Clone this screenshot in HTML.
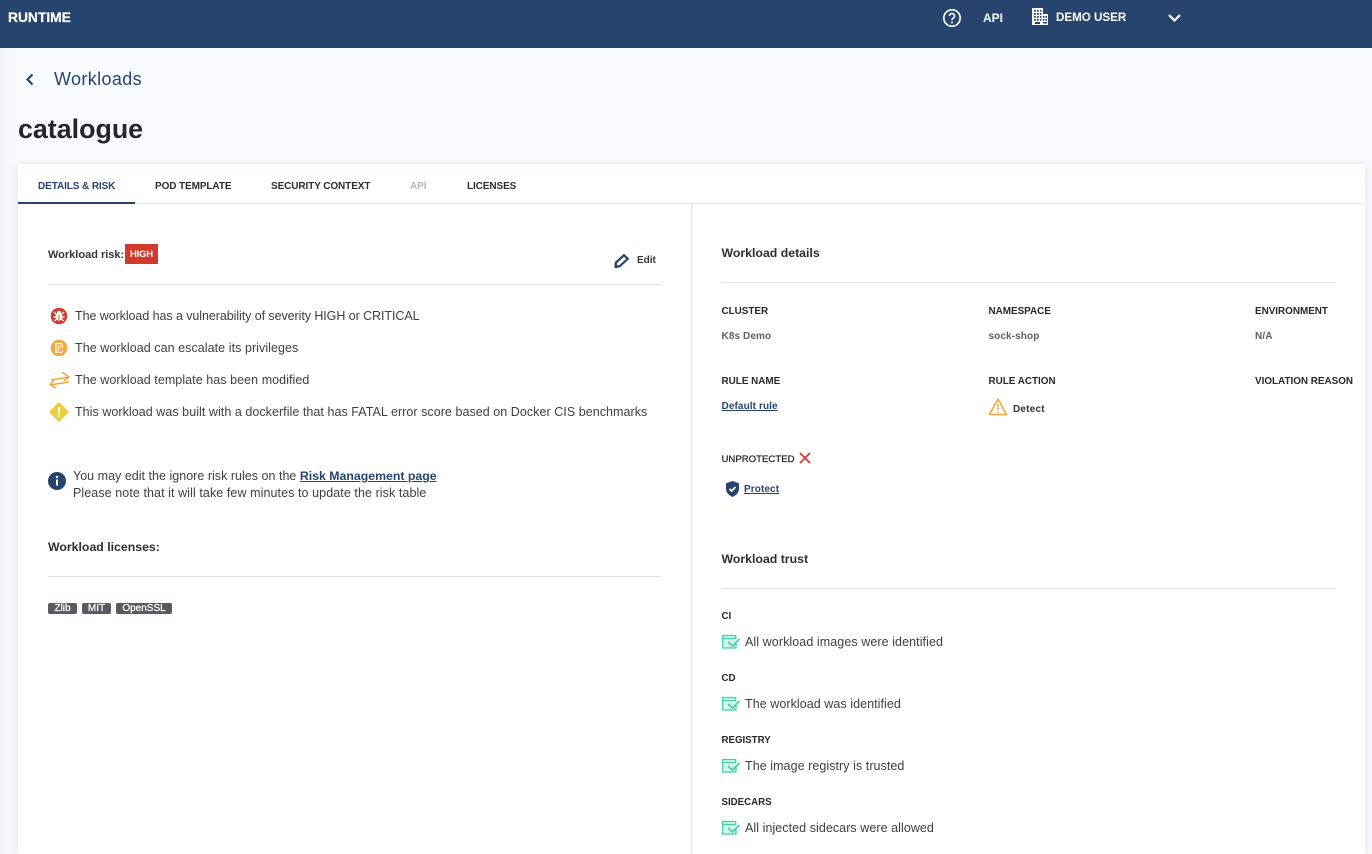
<!DOCTYPE html>
<html lang="en"><head><meta charset="utf-8"><title>catalogue</title>
<style>
html,body{margin:0;padding:0;width:1372px;height:854px;overflow:hidden}
body{position:relative;background:#f8fbff;font-family:"Liberation Sans",sans-serif;color:#33363b}
.a{position:absolute;white-space:nowrap}
.l{position:absolute;background:#dfe2e6;height:1px}
.t{font-size:12.5px;line-height:16px;letter-spacing:.06px;color:#3c3f44}
.b{font-size:12.3px;line-height:16px;font-weight:bold;color:#2b2e33}
.h{font-size:9.9px;line-height:14px;font-weight:bold;color:#26292d}
.v{font-size:10px;line-height:14px;font-weight:bold;color:#5c6068;letter-spacing:.1px}
.tab{font-size:10px;line-height:14px;font-weight:bold;top:180px;color:#2b2e33;letter-spacing:-.1px}
.lnk{font-size:10px;line-height:14px;font-weight:bold;color:#27446e;text-decoration:underline;letter-spacing:.1px}
.tag{position:absolute;top:603px;height:11px;border-radius:2px;background:#565b63;color:#fff;font-size:10px;line-height:11px;text-align:center;-webkit-text-stroke:.25px #fff}
svg{position:absolute;display:block}
</style></head><body>
<div class="a" style="left:0;top:0;width:16px;height:854px;background:linear-gradient(90deg,#f0f3f7,#f8fbff)"></div>
<div class="a" style="left:0;top:0;width:1372px;height:48px;background:#27446e"></div>
<div class="a" style="left:8px;top:10px;font-size:13.8px;line-height:16px;font-weight:bold;color:#fff;-webkit-text-stroke:.2px #fff">RUNTIME</div>
<svg style="left:942px;top:8px" width="20" height="20" viewBox="0 0 20 20" fill="none"><circle cx="10" cy="10" r="8.200" stroke="#fff" stroke-width="1.700"/><path d="M7.500 8a2.500 2.500 0 1 1 3.800 2.100c-.9.600-1.300 1-1.300 2" stroke="#fff" stroke-width="1.600"/><circle cx="10" cy="14.400" r="1" fill="#fff"/></svg>
<div class="a" style="left:983px;top:10px;font-size:12px;line-height:16px;font-weight:bold;color:#fff">API</div>
<svg style="left:1032px;top:8px" width="16" height="17" viewBox="0 0 16 17"><path fill="#fff" d="M0 0h11v6h5v11H0z"/><path fill="#27446e" d="M2 2h1.800v1.800H2zM5 2h1.800v1.800H5zM8 2h1.500v1.800H8zM2 5h1.800v1.800H2zM5 5h1.800v1.800H5zM8 5h1.500v1.800H8zM2 8h1.800v1.800H2zM5 8h1.800v1.800H5zM8 8h1.500v1.800H8zM2 11h1.800v1.800H2zM5 11h1.800v1.800H5zM8 11h1.500v1.800H8zM3 14h5v2H3zM11 8h1.500v1.800H11zM13.500 8H15v1.800h-1.500zM11 11h1.500v1.800H11zM13.500 11H15v1.800h-1.500zM11 14h4v1.500h-4z"/></svg>
<div class="a" style="left:1056px;top:10px;font-size:11.6px;line-height:16px;font-weight:bold;color:#fff">DEMO USER</div>
<svg style="left:1167px;top:13px" width="15" height="10" viewBox="0 0 15 10" fill="none"><path d="M2 2l5.500 5.500L13 2" stroke="#fff" stroke-width="2.200"/></svg>

<svg style="left:24px;top:73px" width="12" height="13" viewBox="0 0 12 13" fill="none"><path d="M8.500 1.500L3.500 6.500l5 5" stroke="#27446e" stroke-width="2.200"/></svg>
<div class="a" style="left:54px;top:68px;font-size:18px;line-height:22px;color:#27446e;letter-spacing:.36px">Workloads</div>
<div class="a" style="left:18px;top:113px;font-size:26.8px;line-height:32px;font-weight:bold;color:#23262b">catalogue</div>

<div class="a" style="left:18px;top:164px;width:1347px;height:690px;background:#fff;box-shadow:0 0 8px rgba(40,60,90,.12)"></div>
<div class="tab a" style="left:38px;color:#27446e">DETAILS &amp; RISK</div>
<div class="tab a" style="left:155px">POD TEMPLATE</div>
<div class="tab a" style="left:271px">SECURITY CONTEXT</div>
<div class="tab a" style="left:410px;color:#b4b8be">API</div>
<div class="tab a" style="left:467px">LICENSES</div>
<div class="a" style="left:18px;top:203px;width:1347px;height:1px;background:#e2e5e9"></div>
<div class="a" style="left:18px;top:202px;width:117px;height:2px;background:#27446e"></div>
<div class="a" style="left:691px;top:204px;width:1px;height:650px;background:#dfe2e6"></div>

<div class="a" style="left:48px;top:248px;font-size:11px;line-height:14px;font-weight:bold;color:#33363b">Workload risk:</div>
<div class="a" style="left:125px;top:244px;width:33px;height:20px;background:#d13a2c;color:#fff;font-size:9.500px;line-height:21px;font-weight:bold;text-align:center;letter-spacing:-.2px">HIGH</div>
<svg style="left:613px;top:252px" width="17" height="17" viewBox="0 0 17 17" fill="none"><path d="M11 3.200L14.800 6.800L7 14L2.700 15L3 10.500z" stroke="#27446e" stroke-width="2.200" stroke-linejoin="round"/><path d="M1.500 15.800V11L6.200 15z" fill="#27446e"/></svg>
<div class="a" style="left:637px;top:254px;font-size:10px;line-height:14px;font-weight:bold;color:#33363b">Edit</div>
<div class="l" style="left:48px;top:284px;width:613px"></div>

<svg style="left:50px;top:307px" width="18" height="18" viewBox="0 0 18 18"><circle cx="9" cy="9" r="8.300" fill="#d13a2c"/><ellipse cx="9" cy="9.800" rx="3.400" ry="3.800" fill="#fff"/><circle cx="9" cy="5.800" r="2.100" fill="#fff"/><path d="M4 5l2.500 2.500M14 5l-2.500 2.500M3.500 10H6M14.500 10H12M4.500 14l2-2M13.500 14l-2-2" stroke="#fff" stroke-width="1.300"/><path d="M9 8v5" stroke="#d13a2c" stroke-width=".8"/></svg>
<div class="a t" style="left:75px;top:308px;letter-spacing:-.07px">The workload has a vulnerability of severity HIGH or CRITICAL</div>
<svg style="left:50px;top:339px" width="18" height="18" viewBox="0 0 18 18" fill="none"><circle cx="9" cy="9" r="8.300" fill="#f0a93e"/><path d="M12 9V4.500H5.800v8.700H9" stroke="#fff" stroke-width="1.300"/><path d="M7.500 7h3M7.500 9.200h3M7.500 11.200h1.500M9.800 12.800l1.200 1.100 2.200-2.400" stroke="#fff" stroke-width="1.100"/></svg>
<div class="a t" style="left:75px;top:340px">The workload can escalate its privileges</div>
<svg style="left:48px;top:371px" width="22" height="18" viewBox="0 0 22 18" fill="none" stroke="#f0a93e" stroke-width="1.500"><path d="M3 9L21 6M14 1l7 5-5 4M21 11L2 14M7 8l-5 5.500L8 17"/></svg>
<div class="a t" style="left:75px;top:372px">The workload template has been modified</div>
<svg style="left:49px;top:402px" width="20" height="20" viewBox="0 0 20 20"><path d="M10 .5a1.500 1.500 0 0 1 1 .4l8 8a1.500 1.500 0 0 1 0 2.200l-8 8a1.500 1.500 0 0 1-2 0l-8-8a1.500 1.500 0 0 1 0-2.200l8-8a1.500 1.500 0 0 1 1-.4z" fill="#e9cf3f"/><path d="M8.900 5h2.200l-.3 6.500H9.200z" fill="#fff"/><circle cx="10" cy="14" r="1.200" fill="#fff"/></svg>
<div class="a t" style="left:75px;top:404px;letter-spacing:.05px">This workload was built with a dockerfile that has FATAL error score based on Docker CIS benchmarks</div>

<svg style="left:48px;top:472px" width="18" height="18" viewBox="0 0 18 18"><circle cx="9" cy="9" r="9" fill="#27446e"/><rect x="8" y="7.500" width="2" height="6" fill="#fff"/><circle cx="9" cy="5" r="1.200" fill="#fff"/></svg>
<div class="a t" style="left:73px;top:468px;letter-spacing:.02px">You may edit the ignore risk rules on the <b style="color:#27446e;text-decoration:underline;font-size:12.3px;letter-spacing:0">Risk Management page</b></div>
<div class="a t" style="left:73px;top:485px;letter-spacing:.08px">Please note that it will take few minutes to update the risk table</div>

<div class="a b" style="left:48px;top:539px">Workload licenses:</div>
<div class="l" style="left:48px;top:576px;width:613px"></div>
<div class="tag" style="left:48px;width:29px">Zlib</div>
<div class="tag" style="left:82px;width:29px">MIT</div>
<div class="tag" style="left:116px;width:56px">OpenSSL</div>

<div class="a b" style="left:721.500px;top:245px">Workload details</div>
<div class="l" style="left:722px;top:282px;width:613px"></div>
<div class="a h" style="left:721.500px;top:305px">CLUSTER</div>
<div class="a h" style="left:988.500px;top:305px">NAMESPACE</div>
<div class="a h" style="left:1255px;top:305px">ENVIRONMENT</div>
<div class="a v" style="left:721.500px;top:330px">K8s Demo</div>
<div class="a v" style="left:988.500px;top:330px">sock-shop</div>
<div class="a v" style="left:1255px;top:330px">N/A</div>
<div class="a h" style="left:721.500px;top:375px">RULE NAME</div>
<div class="a h" style="left:988.500px;top:375px">RULE ACTION</div>
<div class="a h" style="left:1255px;top:375px">VIOLATION REASON</div>
<div class="a lnk" style="left:721.500px;top:400px">Default rule</div>
<svg style="left:988px;top:397px" width="20" height="19" viewBox="0 0 20 19" fill="none"><path d="M10 2L1.500 17.500h17z" stroke="#f0a93e" stroke-width="1.600" stroke-linejoin="round"/><path d="M10 7v6" stroke="#f0a93e" stroke-width="1.500"/><circle cx="10" cy="15" r=".9" fill="#f0a93e"/></svg>
<div class="a" style="left:1013px;top:403px;font-size:10px;line-height:14px;font-weight:bold;color:#33363b;letter-spacing:.2px">Detect</div>
<div class="a" style="left:721.500px;top:453px;font-size:9.600px;line-height:14px;color:#23262b;-webkit-text-stroke:.25px #23262b">UNPROTECTED</div>
<svg style="left:798px;top:451px" width="14" height="14" viewBox="0 0 14 14" fill="none"><path d="M2 2l10 10M12 2L2 12" stroke="#d93f30" stroke-width="1.900"/></svg>
<svg style="left:725px;top:480px" width="15" height="18" viewBox="0 0 15 18"><path d="M7.500 1l6.500 2.300v5.200c0 4-2.700 6.800-6.500 8.500C3.700 15.300 1 12.500 1 8.500V3.300z" fill="#27446e"/><path d="M4.500 8.800l2.200 2.200 3.800-4" fill="none" stroke="#fff" stroke-width="1.700"/></svg>
<div class="a lnk" style="left:744px;top:483px">Protect</div>

<div class="a b" style="left:721.500px;top:551px">Workload trust</div>
<div class="l" style="left:722px;top:588px;width:613px"></div>

<div class="a h" style="left:721.500px;top:610px;font-size:9.700px">CI</div>
<svg style="left:722px;top:634px" width="19" height="15" viewBox="0 0 19 15" fill="none"><path d="M.7 1.500h13v12.500H.7z" fill="#d6f6ec"/><path d="M14 8v6H.7V1.500h13v3H.7" stroke="#3fd0a7" stroke-width="1.300"/><path d="M6 8l4.500 4L17.500 5" stroke="#3fd0a7" stroke-width="1.700"/></svg>
<div class="a t" style="left:745px;top:634px;letter-spacing:.08px">All workload images were identified</div>
<div class="a h" style="left:721.500px;top:672px;font-size:9.700px">CD</div>
<svg style="left:722px;top:696px" width="19" height="15" viewBox="0 0 19 15" fill="none"><path d="M.7 1.500h13v12.500H.7z" fill="#d6f6ec"/><path d="M14 8v6H.7V1.500h13v3H.7" stroke="#3fd0a7" stroke-width="1.300"/><path d="M6 8l4.500 4L17.500 5" stroke="#3fd0a7" stroke-width="1.700"/></svg>
<div class="a t" style="left:745px;top:696px">The workload was identified</div>
<div class="a h" style="left:721.500px;top:734px;font-size:9.700px">REGISTRY</div>
<svg style="left:722px;top:758px" width="19" height="15" viewBox="0 0 19 15" fill="none"><path d="M.7 1.500h13v12.500H.7z" fill="#d6f6ec"/><path d="M14 8v6H.7V1.500h13v3H.7" stroke="#3fd0a7" stroke-width="1.300"/><path d="M6 8l4.500 4L17.500 5" stroke="#3fd0a7" stroke-width="1.700"/></svg>
<div class="a t" style="left:745px;top:758px">The image registry is trusted</div>
<div class="a h" style="left:721.500px;top:796px;font-size:9.700px">SIDECARS</div>
<svg style="left:722px;top:820px" width="19" height="15" viewBox="0 0 19 15" fill="none"><path d="M.7 1.500h13v12.500H.7z" fill="#d6f6ec"/><path d="M14 8v6H.7V1.500h13v3H.7" stroke="#3fd0a7" stroke-width="1.300"/><path d="M6 8l4.500 4L17.500 5" stroke="#3fd0a7" stroke-width="1.700"/></svg>
<div class="a t" style="left:745px;top:820px">All injected sidecars were allowed</div>
</body></html>
